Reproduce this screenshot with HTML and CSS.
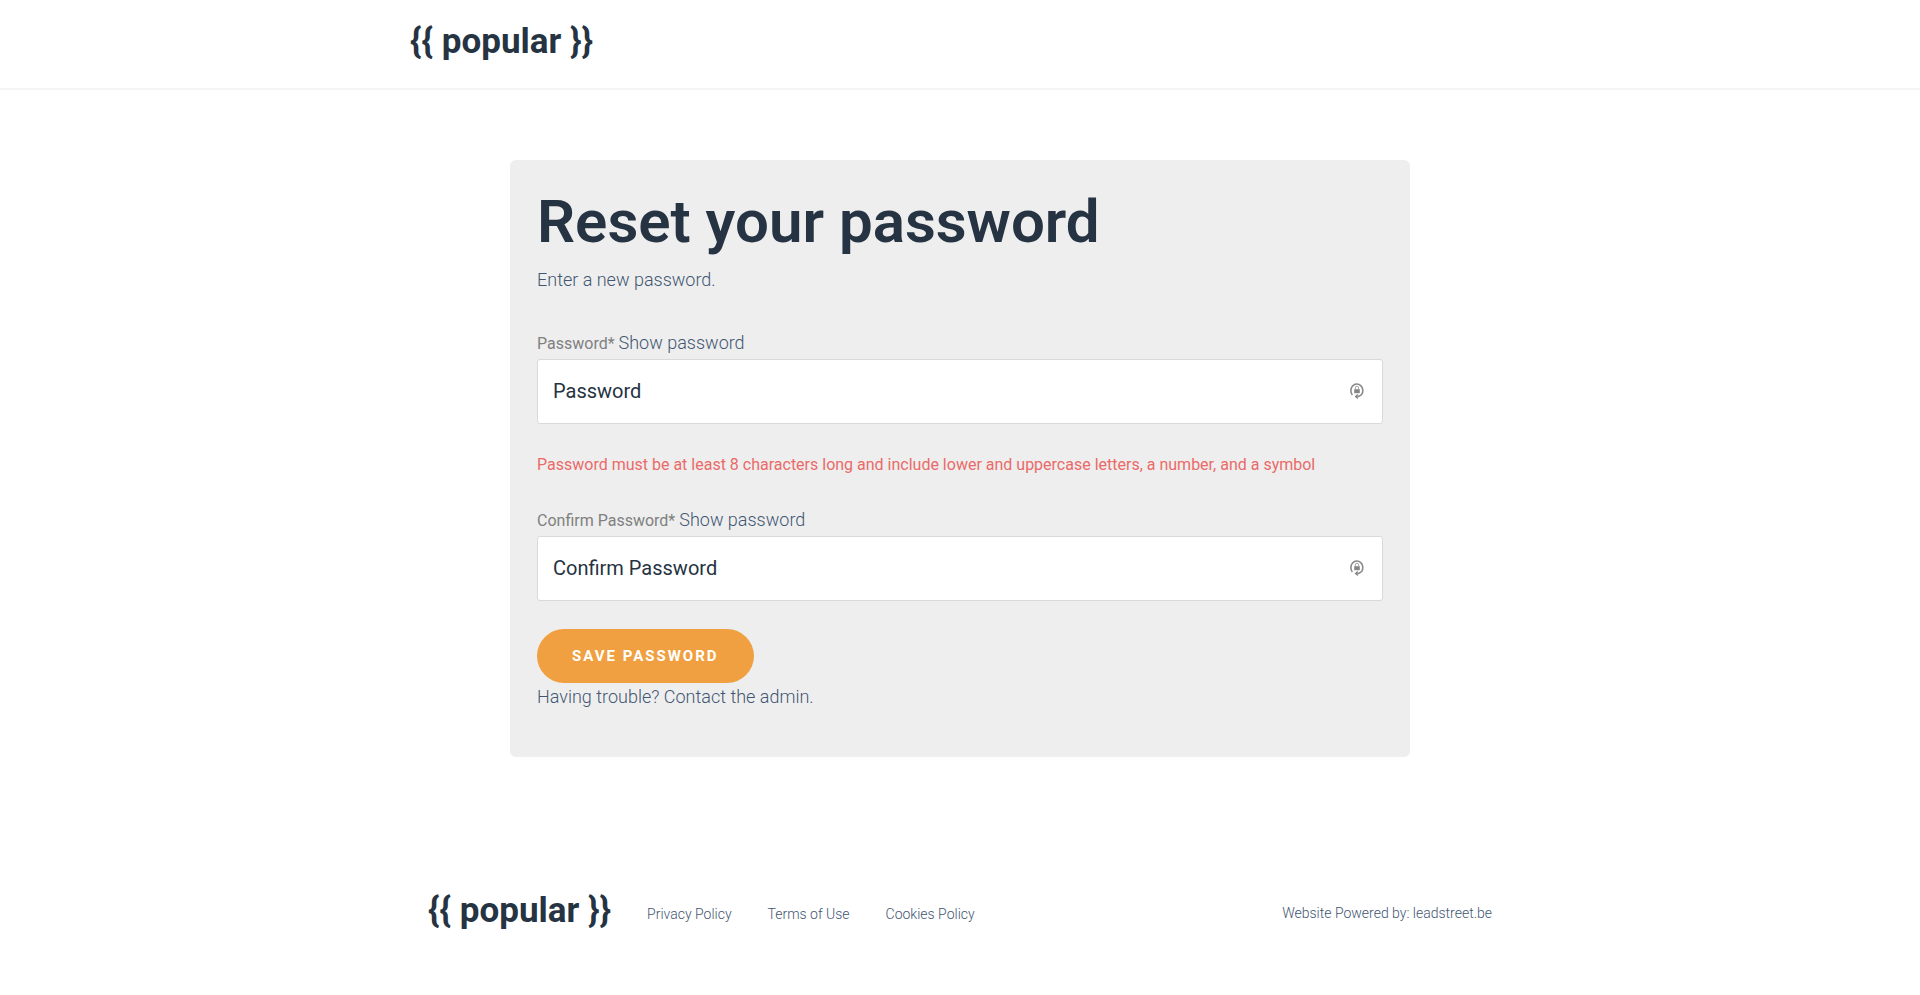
FILE: index.html
```html
<!DOCTYPE html>
<html lang="en">
<head>
<meta charset="utf-8">
<title>Reset your password</title>
<link rel="stylesheet" href="styles.css">
</head>
<body>
<header class="header">
  <div class="container">
    <a class="logo" href="#">{{ popular }}</a>
  </div>
</header>
<main class="card">
  <h1 class="title">Reset your password</h1>
  <p class="intro">Enter a new password.</p>
  <form class="form">
    <div class="label-row">
      <label class="label" for="password">Password*</label>
      <a class="link" href="#">Show password</a>
    </div>
    <div class="field">
      <input class="input" id="password" type="password" placeholder="Password">
      <svg class="key" viewBox="0 0 16 18" aria-hidden="true"><path d="M3.4 13A6 6.6 0 1 1 12.6 12.6Q11.4 14 9 14.6" fill="none" stroke="#8a8a8a" stroke-width="1.6"/><path d="M5.2 7.2h5.6v4H5.2z" fill="#858585"/><path d="M6.4 7.4V5.8a1.6 1.6 0 0 1 3.2 0v1.6" fill="none" stroke="#a0a0a0"/><path d="M8.8 11.8v5.4L5.6 14.5z" fill="#858585"/></svg>
    </div>
    <p class="error">Password must be at least 8 characters long and include lower and uppercase letters, a number, and a symbol</p>
    <div class="label-row">
      <label class="label" for="confirm">Confirm Password*</label>
      <a class="link" href="#">Show password</a>
    </div>
    <div class="field">
      <input class="input" id="confirm" type="password" placeholder="Confirm Password">
      <svg class="key" viewBox="0 0 16 18" aria-hidden="true"><path d="M3.4 13A6 6.6 0 1 1 12.6 12.6Q11.4 14 9 14.6" fill="none" stroke="#8a8a8a" stroke-width="1.6"/><path d="M5.2 7.2h5.6v4H5.2z" fill="#858585"/><path d="M6.4 7.4V5.8a1.6 1.6 0 0 1 3.2 0v1.6" fill="none" stroke="#a0a0a0"/><path d="M8.8 11.8v5.4L5.6 14.5z" fill="#858585"/></svg>
    </div>
    <button class="button" type="submit">SAVE PASSWORD</button>
  </form>
  <p class="help">Having trouble? <a class="link" href="#">Contact the admin.</a></p>
</main>
<footer class="container footer">
  <a class="logo" href="#">{{ popular }}</a>
  <nav class="footer-nav">
    <a class="link" href="#">Privacy Policy</a>
    <a class="link" href="#">Terms of Use</a>
    <a class="link" href="#">Cookies Policy</a>
  </nav>
  <p class="powered">Website Powered by: <a class="link" href="#">leadstreet.be</a></p>
</footer>
</body>
</html>
```
FILE: styles.css
```css
* {
  box-sizing: border-box;
}

body {
  margin: 0;
  background: #fff;
  color: #425672;
  font: 300 18px/28px Roboto, sans-serif;
}

p {
  margin: 0;
}

.container {
  width: 100%;
  max-width: 1100px;
  margin: 0 auto;
}

.header {
  padding: 20px 0 24px;
  border-bottom: 2px solid #f5f5f5;
}

.link {
  color: inherit;
  text-decoration: none;
}

.logo {
  display: block;
  color: #253342;
  font-size: 35px;
  font-weight: 700;
  line-height: 44px;
  text-decoration: none;
}

.card {
  max-width: 900px;
  margin: 70px auto 0;
  padding: 27px 27px 46px;
  border-radius: 6px;
  background: #eee;
}

.title {
  margin: 0 0 9px;
  color: #253342;
  font-size: 60px;
  font-weight: 600;
  line-height: 70px;
}

.intro {
  margin-bottom: 35px;
}

.label-row {
  display: flex;
  align-items: baseline;
  gap: 4px;
}

.label {
  color: #808080;
  font-size: 16px;
  font-weight: 400;
}

.field {
  display: flex;
  position: relative;
  margin-top: 1px;
}

.input {
  width: 100%;
  height: 65px;
  padding: 0 48px 2px 15px;
  border: 1px solid #d9d9d9;
  border-radius: 3px;
  background: #fff;
  color: #253342;
  font: 400 20px/28px Roboto, sans-serif;
}

.input::placeholder {
  color: #253342;
  opacity: 1;
}

.key {
  position: absolute;
  top: 23px;
  right: 18px;
  width: 16px;
  height: 18px;
}

.error {
  margin: 27px 0;
  color: #ea6a69;
  font-size: 16px;
  font-weight: 400;
}

.button {
  display: block;
  height: 54px;
  margin-top: 28px;
  padding: 0 35px;
  border: 0;
  border-radius: 27px;
  background: #f0a040;
  color: #fff;
  font: 700 15px/24px Roboto, sans-serif;
  letter-spacing: 2px;
}

.footer {
  display: flex;
  align-items: center;
  margin-top: 132px;
  padding: 0 18px;
}

.footer-nav {
  display: flex;
  gap: 36px;
  margin-left: 36px;
  padding-top: 6px;
  font-size: 14px;
  line-height: 24px;
}

.powered {
  margin-left: auto;
  padding-top: 4px;
  font-size: 14px;
  line-height: 24px;
}
```
